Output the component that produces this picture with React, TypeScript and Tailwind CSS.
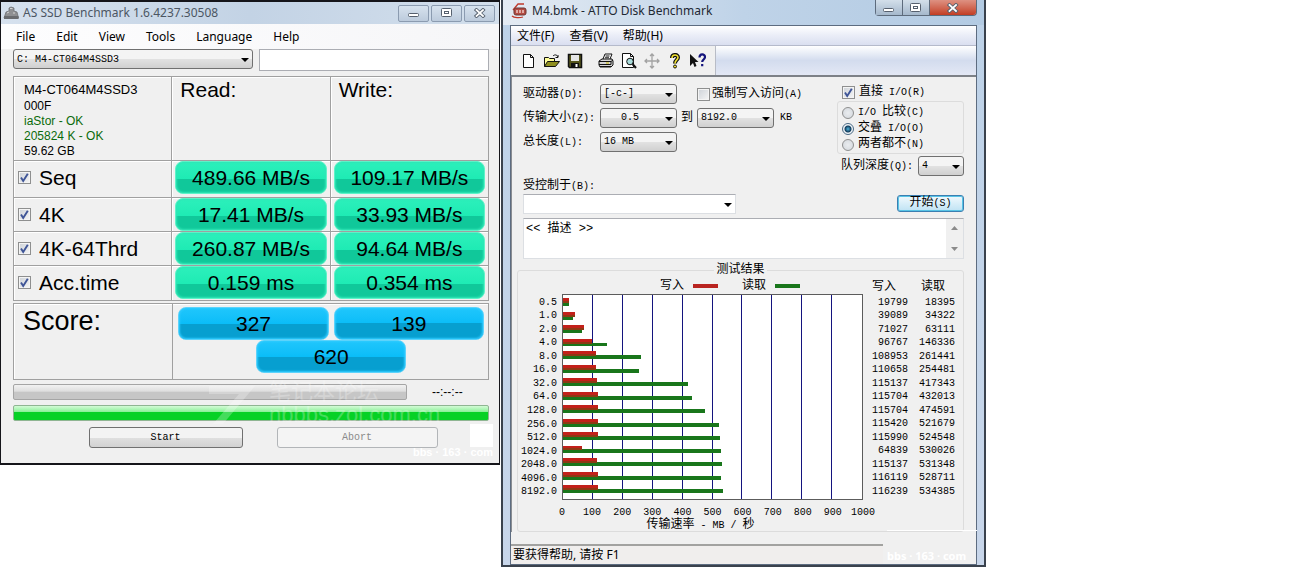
import type { ReactNode } from "react";

const UI_FONT = "font-['Noto_Sans','Noto_Sans_CJK_SC',sans-serif]";
const SONG_FONT = "font-['Liberation_Mono','Noto_Sans_CJK_SC',monospace]";

const speeds = [
  { name: "Seq", read: "489.66 MB/s", write: "109.17 MB/s", row: "h-[37px]" },
  { name: "4K", read: "17.41 MB/s", write: "33.93 MB/s", row: "h-[34px]" },
  { name: "4K-64Thrd", read: "260.87 MB/s", write: "94.64 MB/s", row: "h-[34px]" },
  { name: "Acc.time", read: "0.159 ms", write: "0.354 ms", row: "h-[35px]" },
];

const results = [
  { size: "0.5", write: 19799, read: 18395 },
  { size: "1.0", write: 39089, read: 34322 },
  { size: "2.0", write: 71027, read: 63111 },
  { size: "4.0", write: 96767, read: 146336 },
  { size: "8.0", write: 108953, read: 261441 },
  { size: "16.0", write: 110658, read: 254481 },
  { size: "32.0", write: 115137, read: 417343 },
  { size: "64.0", write: 115704, read: 432013 },
  { size: "128.0", write: 115704, read: 474591 },
  { size: "256.0", write: 115420, read: 521679 },
  { size: "512.0", write: 115990, read: 524548 },
  { size: "1024.0", write: 64839, read: 530026 },
  { size: "2048.0", write: 115137, read: 531348 },
  { size: "4096.0", write: 116119, read: 528711 },
  { size: "8192.0", write: 116239, read: 534385 },
];

const ticks = [0, 100, 200, 300, 400, 500, 600, 700, 800, 900, 1000];

function Zh({ children }: { children: ReactNode }) {
  return <span className="text-xs leading-3">{children}</span>;
}

function Combo({
  id,
  label,
  value,
  className,
  plain,
  indent,
}: {
  id: string;
  label?: string;
  value: string;
  className: string;
  plain?: boolean;
  indent?: boolean;
}) {
  return (
    <div className={`relative h-5 ${className}`}>
      <select
        id={id}
        aria-label={label}
        defaultValue={value}
        className={[
          "block h-full w-full appearance-none pr-4 text-[10px] text-black outline-none",
          indent ? "pl-5" : "pl-[3px]",
          plain
            ? "border border-[#dcdfe3] border-t-[#abadb3] bg-white"
            : "rounded-[3px] border border-[#707070] bg-linear-to-b from-[#f4f4f4] from-50% via-[#e2e2e2] via-50% to-[#d0d0d0]",
        ].join(" ")}
      >
        <option value={value}>{value}</option>
      </select>
      <svg
        viewBox="0 0 8 4"
        className="pointer-events-none absolute right-1 top-[9px] h-1 w-2"
        aria-hidden="true"
      >
        <path d="M0 0h8L4 4z" fill="#000" />
      </svg>
    </div>
  );
}

function Check({ id, checked, label }: { id: string; checked?: boolean; label?: string }) {
  return (
    <span className="relative block size-[13px] shrink-0">
      <input
        id={id}
        type="checkbox"
        defaultChecked={checked}
        aria-label={label}
        className="peer block size-[13px] appearance-none border border-[#8e8f8f] bg-linear-to-br from-[#cdd2d8] to-[#f6f6f6] shadow-[inset_0_0_0_1px_#f4f4f4]"
      />
      <svg
        viewBox="0 0 13 13"
        className="pointer-events-none absolute inset-0 hidden size-[13px] peer-checked:block"
        aria-hidden="true"
      >
        <path d="M3 6.5 5.2 10 9.8 2.8" fill="none" stroke="#3f5597" strokeWidth="1.9" />
      </svg>
    </span>
  );
}

function Radio({ id, checked, children }: { id: string; checked?: boolean; children: ReactNode }) {
  return (
    <label htmlFor={id} className="flex h-4 items-center gap-1 whitespace-nowrap leading-4">
      <input
        id={id}
        name="io-mode"
        type="radio"
        defaultChecked={checked}
        className="size-3 shrink-0 appearance-none rounded-full border border-[#8e8f8f] bg-[radial-gradient(circle,#e9ecef,#d3d7dc)] checked:border-[#4b6b85] checked:bg-[radial-gradient(circle,#4fb4dc_0,#123c5c_3px,#eef3f7_4px)]"
      />
      <span>{children}</span>
    </label>
  );
}

function Pill({ children, blue, className = "w-full" }: { children: ReactNode; blue?: boolean; className?: string }) {
  return (
    <div
      className={[
        "flex h-[33px] items-center justify-center rounded-lg border pt-px text-[21px] leading-6 text-black",
        blue
          ? "border-[#5cd3fb] bg-linear-to-b from-[#1fc6fc] from-0% via-[#0abdf8] via-50% to-[#079fd0] to-50% shadow-[inset_0_0_2px_1px_#2ecbff]"
          : "border-[#5df3c8] bg-linear-to-b from-[#2cf0bb] from-0% via-[#1eebb4] via-55% to-[#10c89a] to-55% shadow-[inset_0_0_2px_1px_#2fe6b6]",
        className,
      ].join(" ")}
    >
      {children}
    </div>
  );
}

function CaptionGlyph({ kind }: { kind: "min" | "max" | "close" }) {
  return (
    <svg viewBox="0 0 12 10" className="h-[10px] w-3" aria-hidden="true">
      {kind === "min" && (
        <rect x="0.5" y="5.5" width="10" height="3" rx="1" fill="#fff" stroke="#56606e" />
      )}
      {kind === "max" && (
        <g fill="#fff" stroke="#56606e">
          <rect x="0.5" y="0.5" width="10" height="8" rx="1" />
          <rect x="3.5" y="3.5" width="4" height="2" />
        </g>
      )}
      {kind === "close" && (
        <g fill="none" strokeLinecap="square">
          <path d="M2.5 2 9 8M9 2 2.5 8" stroke="#56606e" strokeWidth="3.6" />
          <path d="M2.5 2 9 8M9 2 2.5 8" stroke="#fff" strokeWidth="1.8" />
        </g>
      )}
    </svg>
  );
}

function AsSsdWindow() {
  const glass =
    "flex h-[17px] w-[31px] items-center justify-center rounded-[2px] border border-[#8b9bb0] bg-linear-to-b from-[#d7e2ee] to-[#bccbdc]";
  const cell = "border border-[#a0a0a0] p-0 shadow-[inset_1px_1px_0_#fff]";

  return (
    <section className="relative self-start border-x border-t-2 border-b-2 border-[#15151a] bg-[#f0f0f0] font-['Liberation_Sans',sans-serif]">
      <header className="flex h-[22px] items-center bg-linear-to-r from-[#d6e1ee] via-[#c3d3e5] to-[#d3dfec] pr-1 pl-0.5">
        <svg viewBox="0 0 16 14" className="h-3.5 w-4" aria-hidden="true">
          <path d="M1 12 3 6l3-1 0-3 2-1 3 1 0 3 3 1 1.500 6z" fill="#8f9093" stroke="#66676b" strokeWidth=".7" />
          <path d="M7 2.500h2.500M4 7l2-1M10 7h2" stroke="#d4d4d4" />
          <path d="M1 10h14.500v3H1z" fill="#6a6c70" />
        </svg>
        <h1 className={`ml-1 whitespace-nowrap text-xs text-[#4c5663] ${UI_FONT}`}>
          AS SSD Benchmark 1.6.4237.30508
        </h1>
        <div className="ml-auto flex gap-0.5">
          <button type="button" aria-label="Minimize" className={glass}>
            <CaptionGlyph kind="min" />
          </button>
          <button type="button" aria-label="Maximize" className={glass}>
            <CaptionGlyph kind="max" />
          </button>
          <button type="button" aria-label="Close" className={glass}>
            <CaptionGlyph kind="close" />
          </button>
        </div>
      </header>

      <nav className={`flex h-[25px] items-center gap-[21px] bg-linear-to-r from-[#fdfdfe] to-[#f6f6f8] pl-[15px] text-xs text-black ${UI_FONT}`}>
        {["File", "Edit", "View", "Tools", "Language", "Help"].map((item) => (
          <button key={item} type="button">
            {item}
          </button>
        ))}
      </nav>

      <div className="pr-[10px] pl-3">
        <div className="flex gap-1.5">
          <Combo
            id="drive"
            label="Drive"
            value="C: M4-CT064M4SSD3"
            className={`w-[240px] ${SONG_FONT}`}
          />
          <input
            type="text"
            aria-label="Result note"
            className="h-[22px] min-w-0 flex-1 border border-[#abadb3] bg-white px-1 text-xs"
          />
        </div>

        <table className="mt-[5px] w-full table-fixed border-collapse text-[21px] leading-6 text-black">
          <thead>
            <tr className="h-[84px] align-top">
              <th className={`${cell} pt-1 pl-[10px] text-left text-xs font-normal leading-[15px]`}>
                <div className="text-[13px] leading-[18px]">M4-CT064M4SSD3</div>
                <div>000F</div>
                <div className="text-[#0b6b0b]">iaStor - OK</div>
                <div className="text-[#0b6b0b]">205824 K - OK</div>
                <div>59.62 GB</div>
              </th>
              <th className={`${cell} pt-px pl-2 text-left font-normal`}>Read:</th>
              <th className={`${cell} pt-px pl-2 text-left font-normal`}>Write:</th>
            </tr>
          </thead>
          <tbody>
            {speeds.map((s) => (
              <tr key={s.name} className={s.row}>
                <td className={`${cell} align-top`}>
                  <label htmlFor={`run-${s.name}`} className="flex h-[33px] items-center gap-2 pl-1">
                    <Check id={`run-${s.name}`} checked />
                    <span>{s.name}</span>
                  </label>
                </td>
                <td className={`${cell} px-[3px] align-top`}>
                  <Pill>{s.read}</Pill>
                </td>
                <td className={`${cell} px-[3px] align-top`}>
                  <Pill>{s.write}</Pill>
                </td>
              </tr>
            ))}
          </tbody>
        </table>

        <div className="mt-0.5 grid h-[77px] grid-cols-[160fr_316fr] border border-[#a0a0a0] shadow-[inset_1px_1px_0_#fff]">
          <h2 className="border-r border-[#a0a0a0] pt-px pl-[9px] text-[27px] leading-8 text-black">Score:</h2>
          <div className="flex flex-col items-center pt-[3px] pr-1 pl-[5px]">
            <div className="flex w-full gap-[5px]">
              <Pill blue>327</Pill>
              <Pill blue>139</Pill>
            </div>
            <Pill blue className="w-[150px]">
              620
            </Pill>
          </div>
        </div>

        <div className="mt-1 flex items-center">
          <div
            role="progressbar"
            aria-label="Current test"
            className="h-4 flex-1 rounded-[2px] border border-[#a5a5a5] bg-linear-to-b from-[#f2f2f2] from-0% via-[#dedede] via-45% to-[#c6c6c6] to-50%"
          />
          <span className="w-[82px] pl-[25px] text-xs leading-4 text-black">--:--:--</span>
        </div>
        <div
          role="progressbar"
          aria-label="Total"
          className="mt-[5px] h-4 rounded-[2px] border border-[#8fb592] bg-linear-to-b from-[#d2fbd6] from-0% via-[#8df09a] via-40% to-[#06d125] to-45%"
        />

        <div className={`mt-1.5 mb-[15px] flex justify-center gap-[34px] pl-6 text-[10px] ${SONG_FONT}`}>
          <button
            type="button"
            className="h-[21px] w-[154px] rounded-[3px] border border-[#707070] bg-linear-to-b from-[#f3f3f3] from-50% via-[#e0e0e0] via-50% to-[#d2d2d2] text-black"
          >
            Start
          </button>
          <button
            type="button"
            disabled
            className="h-[21px] w-[161px] rounded-[3px] border border-[#b2b5b8] bg-[#f4f4f4] text-[#8a8a8a]"
          >
            Abort
          </button>
        </div>
      </div>

      {/* faint site stamps over the lower part of the window */}
      <div className="pointer-events-none absolute bottom-[37px] left-[206px] flex items-end gap-3 text-white opacity-25">
        <svg viewBox="0 0 50 42" className="h-[42px] w-[50px]" aria-hidden="true">
          <path d="M2 2h46L16 40H6L32 10H2z" fill="#fff" />
        </svg>
        <div className="font-['Liberation_Sans','Noto_Sans_CJK_SC',sans-serif] text-[22px] leading-[23px]">
          <div>笔记本论坛</div>
          <div>nbbbs.zol.com.cn</div>
        </div>
      </div>
      <div className="pointer-events-none absolute right-1.5 bottom-4 size-[23px] bg-white" />
      <div className="pointer-events-none absolute right-1.5 bottom-1.5 text-[11px] font-bold leading-[10px] text-white">
        bbs · 163 · com
      </div>
    </section>
  );
}

function ToolIcon({ kind }: { kind: string }) {
  return (
    <svg viewBox="0 0 16 16" className="size-4" aria-hidden="true" fill="none" stroke="#111">
      {kind === "New" && <path d="M2.500 1.5h7l3 3v10h-10zM9.5 1.5v3h3" fill="#fff" />}
      {kind === "Open" && (
        <>
          <path d="M.5 13.5v-9h4l1 1h5v3" fill="#ffff9a" />
          <path d="m.5 13.5 3-5h12l-4 5z" fill="#8f8f20" />
          <path d="M9 3c2-2 4-1 5 1m0-2v2.5h-2.500" />
        </>
      )}
      {kind === "Save" && (
        <>
          <path d="M1.500 1.500h13v13h-12l-1-1z" fill="#55551c" strokeWidth="1.500" />
          <path d="M4 2h8v6H4z" fill="#e6e6e6" stroke="none" />
          <path d="M4 10h8v4H4z" fill="#111" stroke="none" />
          <path d="M9.500 11v3" stroke="#fff" strokeWidth="2" />
        </>
      )}
      {kind === "Print" && (
        <>
          <path d="m5 6 2-5h7l-2 5M7.500 3h4M7 4.800h4" fill="#fff" />
          <path d="M1 8 4 6h10l1 2v4l-2 2H2l-1-2z" fill="#d6d6d6" />
          <path d="M1 8.500h12v3H1M13 8.500 15 7M2 13.500h11" />
          <path d="M8 10h3" stroke="#c9b900" />
        </>
      )}
      {kind === "Preview" && (
        <>
          <path d="M1.500.5h8l3 3v11h-11zM9.500.5v3h3" fill="#fff" />
          <circle cx="9" cy="8.500" r="3.300" fill="#a9dcdc" />
          <path d="m11.500 11 3.500 4" strokeWidth="2" />
        </>
      )}
      {kind === "Move" && (
        <path
          d="M8 1v14M1 8h14M6 3l2-2 2 2M6 13l2 2 2-2M3 6 1 8l2 2M13 6l2 2-2 2"
          stroke="#a2a2a2"
          strokeWidth="1.300"
        />
      )}
      {kind === "Help" && (
        <>
          <path d="M5 5c0-4 6-4 6-.5C11 7 8 7 8 10.500" strokeWidth="4" />
          <path d="M5 5c0-4 6-4 6-.5C11 7 8 7 8 10.500" stroke="#f0e030" strokeWidth="1.600" />
          <circle cx="8" cy="13.500" r="1.500" fill="#f0e030" />
        </>
      )}
      {kind === "Context help" && (
        <>
          <path d="M0 1v12l3-3 1.500 4 2-1L5 9h3.500z" fill="#111" stroke="none" />
          <path d="M9.500 4.500c0-4 5.500-4 5.500-.5 0 2.500-2.800 2.500-2.800 5M12.200 11v2.200" stroke="#15157c" strokeWidth="2.200" />
        </>
      )}
    </svg>
  );
}

function ToolButton({ kind }: { kind: string }) {
  return (
    <button type="button" aria-label={kind} className="flex h-6 w-[23px] items-center justify-center">
      <ToolIcon kind={kind} />
    </button>
  );
}

function ResultChart() {
  return (
    <svg
      viewBox="0 0 300 206"
      preserveAspectRatio="none"
      shapeRendering="crispEdges"
      role="img"
      aria-label="传输速率"
      className="block h-[206px] w-full border border-[#5c5c5c] bg-white"
    >
      {ticks.slice(1, -1).map((t) => (
        <rect key={t} x={t * 0.3 - 1} y="0" width="1" height="206" fill="#14147e" />
      ))}
      {results.map((r, i) => {
        const y = Math.round(3 + i * 13.5);
        return (
          <g key={r.size}>
            <rect x="0" y={y + 4} width={r.read * 0.0003} height="4" fill="#19761b" />
            <rect x="0" y={y} width={r.write * 0.0003} height="4" fill="#c3201a" />
            <rect x="0" y={y + 3} width={r.write * 0.0003} height="2" fill="#8c3a14" />
          </g>
        );
      })}
    </svg>
  );
}

function AttoWindow() {
  return (
    <section className={`relative flex flex-col self-start border-x-2 border-b-2 border-[#3a424d] bg-linear-to-b from-[#bdd2e8] to-[#c8d6ea] px-[7px] text-black ${UI_FONT}`}>
      <header className="-mx-[7px] flex h-[25px] items-start bg-linear-to-r from-[#e4ebf3] via-[#bfd3e8] to-[#b3cbe3] pr-[7px] pl-2">
        <svg viewBox="0 0 17 17" className="mt-0.5 h-[17px] w-[17px]" aria-hidden="true">
          <path d="M2 8 7 2h6M1 14c2 2 8 2 11 1" fill="none" stroke="#c03a2c" strokeWidth="1.3" />
          <rect x="3" y="6" width="12" height="7" rx="2" fill="#b44c43" stroke="#6e3732" />
          <path d="M5 8h2v3H5zM8 8h2v3H8zM11 8h2v3h-2z" fill="#dfaaa4" />
        </svg>
        <h1 className="ml-1 whitespace-nowrap pt-px text-xs leading-5 text-[#1e2833]">M4.bmk - ATTO Disk Benchmark</h1>
        <div className="ml-auto flex h-4 rounded-b-[4px] border border-t-0 border-[#5d6b7c]">
          <button
            type="button"
            aria-label="最小化"
            className="flex w-[27px] items-center justify-center border-r border-[#5d6b7c] bg-linear-to-b from-[#d3dfea] to-[#a5b8cc]"
          >
            <CaptionGlyph kind="min" />
          </button>
          <button
            type="button"
            aria-label="最大化"
            className="flex w-[27px] items-center justify-center border-r border-[#5d6b7c] bg-linear-to-b from-[#d3dfea] to-[#a5b8cc]"
          >
            <CaptionGlyph kind="max" />
          </button>
          <button
            type="button"
            aria-label="关闭"
            className="flex w-[46px] items-center justify-center rounded-br-[3px] bg-linear-to-b from-[#dd9182] to-[#c23c22]"
          >
            <CaptionGlyph kind="close" />
          </button>
        </div>
      </header>

      <div className="border border-[#5d6c80] bg-[#f0f0f0]">
        <nav className="flex h-5 items-center gap-[15px] border-b border-[#b5bacb] bg-linear-to-b from-white via-[#eaedf7] to-[#dadff0] pl-1.5 text-xs">
          <button type="button">文件(F)</button>
          <button type="button">查看(V)</button>
          <button type="button">帮助(H)</button>
        </nav>
        <div className="flex h-[31px] border-b-2 border-[#7d8187] bg-linear-to-b from-white via-[#d3dcee] to-[#e3e8f5]">
          <div className="flex items-center border-r border-[#b8bcc6] bg-[#f0f0f0] px-1.5">
            <ToolButton kind="New" />
            <ToolButton kind="Open" />
            <ToolButton kind="Save" />
            <div className="w-2" />
            <ToolButton kind="Print" />
            <ToolButton kind="Preview" />
            <ToolButton kind="Move" />
            <ToolButton kind="Help" />
            <ToolButton kind="Context help" />
          </div>
        </div>

        <form
          className={`border-l border-[#8a8d92] pt-[7px] pr-3 pl-[11px] text-[10px] leading-3 ${SONG_FONT}`}
          onSubmit={(e) => e.preventDefault()}
        >
          <div className="flex justify-between">
            <div className="flex flex-col gap-1 whitespace-nowrap">
              <div className="flex h-5 items-center">
                <label htmlFor="atto-drive" className="w-[77px]">
                  <Zh>驱动器</Zh>(D):
                </label>
                <Combo id="atto-drive" value="[-c-]" className="w-[77px]" />
                <label htmlFor="force-write" className="ml-5 flex items-center gap-0.5">
                  <Check id="force-write" />
                  <span>
                    <Zh>强制写入访问</Zh>(A)
                  </span>
                </label>
              </div>
              <div className="flex h-5 items-center">
                <label htmlFor="size-from" className="w-[77px]">
                  <Zh>传输大小</Zh>(Z):
                </label>
                <Combo id="size-from" value="0.5" className="w-[77px]" indent />
                <label htmlFor="size-to" className="mx-1">
                  <Zh>到</Zh>
                </label>
                <Combo id="size-to" value="8192.0" className="w-[77px]" />
                <span className="ml-1.5">KB</span>
              </div>
              <div className="flex h-5 items-center">
                <label htmlFor="total-length" className="w-[77px]">
                  <Zh>总长度</Zh>(L):
                </label>
                <Combo id="total-length" value="16 MB" className="w-[77px]" />
              </div>
            </div>

            <div className="w-[127px] pt-px">
              <label htmlFor="direct-io" className="flex h-[15px] items-center gap-1 pl-[5px]">
                <Check id="direct-io" checked />
                <span>
                  <Zh>直接</Zh> I/O(R)
                </span>
              </label>
              <fieldset className="mt-px rounded-[3px] border border-[#dcdcdc] pt-[3px] pl-1">
                <Radio id="io-compare">
                  I/O <Zh>比较</Zh>(C)
                </Radio>
                <Radio id="io-overlap" checked>
                  <Zh>交叠</Zh> I/O(O)
                </Radio>
                <Radio id="io-neither">
                  <Zh>两者都不</Zh>(N)
                </Radio>
              </fieldset>
              <div className="mt-0.5 flex items-center justify-between pl-1">
                <label htmlFor="queue-depth" className="whitespace-nowrap">
                  <Zh>队列深度</Zh>(Q):
                </label>
                <Combo id="queue-depth" value="4" className="w-[46px]" />
              </div>
            </div>
          </div>

          <div className="mt-1 flex items-end justify-between">
            <div className="w-[213px]">
              <label htmlFor="controlled-by" className="block h-3">
                <Zh>受控制于</Zh>(B):
              </label>
              <Combo id="controlled-by" value="" className="mt-0.5" plain />
            </div>
            <button
              type="submit"
              className="mb-0.5 h-[17px] w-[67px] rounded-[3px] border border-[#3c7fb1] bg-linear-to-b from-[#f1f9fd] to-[#bfe3f4] shadow-[inset_0_0_0_1px_#58c4e6]"
            >
              <Zh>开始</Zh>(S)
            </button>
          </div>

          <div className="mt-1 flex h-[41px] border border-[#dcdfe3] border-t-[#abadb3] bg-white">
            <textarea
              aria-label="描述"
              defaultValue="<< 描述 >>"
              className="min-w-0 flex-1 resize-none overflow-hidden pt-[3px] pl-0.5 text-xs leading-[14px] outline-none"
            />
            <div className="flex w-[17px] flex-col items-center justify-between bg-[#f0f0f0] py-[7px]">
              <svg viewBox="0 0 7 4" className="h-1 w-[7px]" aria-hidden="true">
                <path d="M0 4h7L3.500 0z" fill="#8b8b8b" />
              </svg>
              <svg viewBox="0 0 7 4" className="h-1 w-[7px]" aria-hidden="true">
                <path d="M0 0h7L3.500 4z" fill="#8b8b8b" />
              </svg>
            </div>
          </div>

          <fieldset className="-ml-1.5 mt-1 min-w-0 rounded-[3px] border border-[#dcdcdc]">
            <legend className="mx-auto px-0.5 text-xs leading-[14px]">测试结果</legend>
            <div className="flex">
              <div className="mt-[19px] mr-[5px] flex h-[203px] w-[39px] flex-col text-right">
                {results.map((r) => (
                  <div key={r.size} className="flex flex-1 items-center justify-end">
                    {r.size}
                  </div>
                ))}
              </div>

              <div className="min-w-0 flex-1">
                <div className="flex h-[17px] items-center pl-[98px] text-xs">
                  <span>写入</span>
                  <span className="ml-[9px] h-1 w-[25px] bg-[#b92420]" />
                  <span className="ml-6">读取</span>
                  <span className="ml-[9px] h-1 w-[25px] bg-[#19761b]" />
                </div>
                <ResultChart />
                <div className="mt-[7px] flex justify-between">
                  {ticks.map((t) => (
                    <span key={t} className="flex w-0 justify-center">
                      {t}
                    </span>
                  ))}
                </div>
                <div className="h-3 pr-6 text-center">
                  <Zh>传输速率</Zh> - MB / <Zh>秒</Zh>
                </div>
              </div>

              <table className="mr-2 ml-[9px] w-[83px] self-start border-collapse text-right">
                <thead>
                  <tr className="h-[19px] text-left text-xs">
                    <th className="p-0 font-normal">写入</th>
                    <th className="p-0 pl-[13px] font-normal">读取</th>
                  </tr>
                </thead>
                <tbody>
                  {results.map((r) => (
                    <tr key={r.size} className="h-[13px] even:h-[14px]">
                      <td className="w-9 p-0">{r.write}</td>
                      <td className="p-0">{r.read}</td>
                    </tr>
                  ))}
                </tbody>
              </table>
            </div>
          </fieldset>
        </form>

        <footer className="mt-3 mr-[93px] border-t-2 border-[#a2a2a0] bg-[#f0eeed] pl-0.5 text-xs leading-[18px]">
          要获得帮助, 请按 F1
        </footer>
      </div>

      <div className="pointer-events-none absolute right-[7px] bottom-1 w-[90px] border-t border-white pt-5 text-[11px] font-bold leading-[10px] text-white">
        bbs · 163 · com
      </div>
    </section>
  );
}

export default function App() {
  return (
    <main className="grid grid-cols-[500fr_1fr_485fr_303fr] bg-white">
      <AsSsdWindow />
      <div />
      <AttoWindow />
    </main>
  );
}
